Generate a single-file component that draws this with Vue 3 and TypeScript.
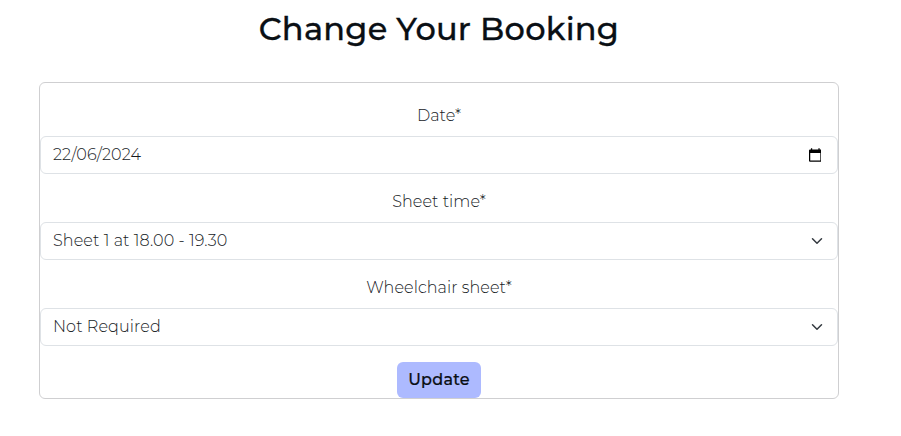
<script setup lang="ts">
import { ref } from 'vue'

const date = ref<string>('22/06/2024')
const sheetTime = ref<string>('Sheet 1 at 18.00 - 19.30')
const wheelchair = ref<string>('Not Required')
</script>

<template>
  <main class="page">
    <h1 class="title">Change Your Booking</h1>
    <form class="card" @submit.prevent>
      <div class="field">
        <label class="label" for="date">Date*</label>
        <div class="control">
          <input id="date" v-model="date" class="input" type="text" />
          <svg class="calendar" viewBox="0 0 13 14" aria-hidden="true">
            <path fill="#000" fill-rule="evenodd" d="M2 0h1.300v1.300h6.400V0H11v1.300h.9q1.100 0 1.100 1.100v10.500q0 1.100-1.100 1.100H1.100Q0 14 0 12.900V2.400q0-1.100 1.100-1.100H2zM1.300 5v7.700h10.400V5z" />
          </svg>
        </div>
      </div>
      <div class="field">
        <label class="label" for="time">Sheet time*</label>
        <div class="control">
          <select id="time" v-model="sheetTime" class="input">
            <option>Sheet 1 at 18.00 - 19.30</option>
          </select>
          <svg class="chevron" viewBox="0 0 16 16" aria-hidden="true">
            <path d="m2 5 6 6 6-6" />
          </svg>
        </div>
      </div>
      <div class="field">
        <label class="label" for="wheelchair">Wheelchair sheet*</label>
        <div class="control">
          <select id="wheelchair" v-model="wheelchair" class="input">
            <option>Not Required</option>
          </select>
          <svg class="chevron" viewBox="0 0 16 16" aria-hidden="true">
            <path d="m2 5 6 6 6-6" />
          </svg>
        </div>
      </div>
      <button class="update" type="submit">Update</button>
    </form>
  </main>
</template>

<style>
body {
  background: #fff;
  overflow: hidden;
}
</style>

<style scoped>
.page {
  box-sizing: border-box;
  width: 878px;
  padding: 5px 39px 0;
  font-family: Montserrat, Inter, 'Liberation Sans', sans-serif;
  font-weight: 300;
  font-size: 16px;
  letter-spacing: 0.07px;
  color: #161a1e;
}
.title {
  margin: 0 0 29px;
  height: 48px;
  line-height: 48px;
  text-align: center;
  white-space: nowrap;
  font-size: 32px;
  font-weight: 500;
  letter-spacing: 0.25px;
  color: #0a0f14;
  -webkit-text-stroke: 0.3px #0a0f14;
}
.card {
  box-sizing: border-box;
  height: 317px;
  display: flex;
  flex-direction: column;
  gap: 16px;
  padding-top: 21px;
  border: 1px solid #cfcfd1;
  border-radius: 6px;
}
.field {
  display: flex;
  flex-direction: column;
  gap: 8px;
}
.label {
  height: 24px;
  line-height: 24px;
  text-align: center;
}
.control {
  display: grid;
  align-items: center;
}
.control > * {
  grid-area: 1 / 1;
}
.input {
  box-sizing: border-box;
  width: 100%;
  height: 38px;
  margin: 0;
  padding: 0 12px 2px;
  border: 1px solid #dee2e6;
  border-radius: 6px;
  background: transparent;
  appearance: none;
  font: inherit;
  letter-spacing: 0.1px;
  color: inherit;
  outline: none;
}
.calendar {
  justify-self: end;
  width: 12.600px;
  height: 14px;
  margin: 0 16.600px 1px 0;
  pointer-events: none;
}
.chevron {
  justify-self: end;
  width: 16px;
  height: 12px;
  margin-right: 13px;
  fill: none;
  stroke: #343a40;
  stroke-width: 2;
  stroke-linecap: round;
  stroke-linejoin: round;
  pointer-events: none;
}
.update {
  align-self: center;
  width: 84px;
  height: 36px;
  padding: 0 0 2px;
  border: 0;
  border-radius: 6px;
  background: #adbaff;
  font: inherit;
  font-weight: 500;
  letter-spacing: 0.25px;
  color: #0a0f14;
  -webkit-text-stroke: 0.2px #0a0f14;
}
</style>
